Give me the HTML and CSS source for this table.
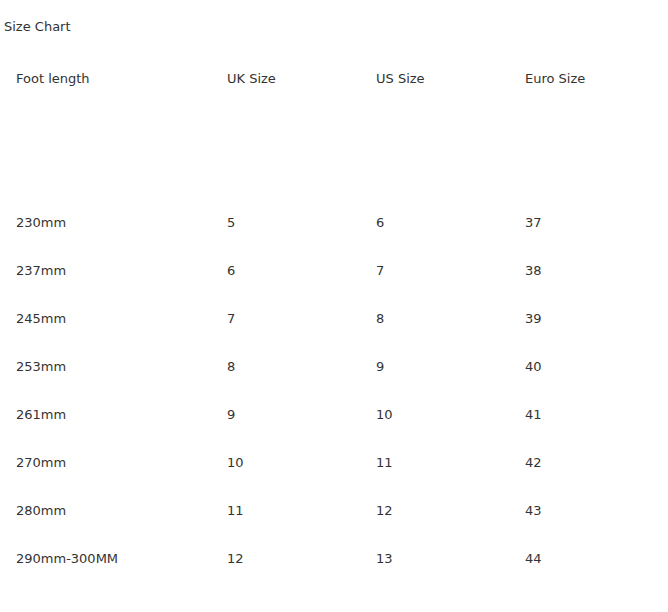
FILE: index.html
```html
<!DOCTYPE html>
<html>
<head>
<meta charset="utf-8">
<link rel="stylesheet" href="styles.css">
</head>
<body>
<div class="page">
  <div class="title">Size Chart</div>
  <div class="chart">
    <div class="row head">
      <div class="cell">Foot length</div>
      <div class="cell">UK Size</div>
      <div class="cell">US Size</div>
      <div class="cell">Euro Size</div>
    </div>
    <div class="spacer"></div>
    <div class="row"><div class="cell">230mm</div><div class="cell">5</div><div class="cell">6</div><div class="cell">37</div></div>
    <div class="row"><div class="cell">237mm</div><div class="cell">6</div><div class="cell">7</div><div class="cell">38</div></div>
    <div class="row"><div class="cell">245mm</div><div class="cell">7</div><div class="cell">8</div><div class="cell">39</div></div>
    <div class="row"><div class="cell">253mm</div><div class="cell">8</div><div class="cell">9</div><div class="cell">40</div></div>
    <div class="row"><div class="cell">261mm</div><div class="cell">9</div><div class="cell">10</div><div class="cell">41</div></div>
    <div class="row"><div class="cell">270mm</div><div class="cell">10</div><div class="cell">11</div><div class="cell">42</div></div>
    <div class="row"><div class="cell">280mm</div><div class="cell">11</div><div class="cell">12</div><div class="cell">43</div></div>
    <div class="row"><div class="cell">290mm-300MM</div><div class="cell">12</div><div class="cell">13</div><div class="cell">44</div></div>
  </div>
</div>
</body>
</html>
```

FILE: styles.css
```css
html, body {
  margin: 0;
  padding: 0;
  background: #ffffff;
}

.page {
  padding: 17px 4px 0 4px;
  font-family: "DejaVu Sans", "Liberation Sans", sans-serif;
  font-size: 13px;
  color: #333333;
}

.title {
  line-height: 20px;
  height: 20px;
  margin-bottom: 18px;
}

.chart {
  display: flex;
  flex-direction: column;
}

.row {
  display: grid;
  grid-template-columns: 211px 149px 149px 1fr;
  height: 48px;
  align-items: center;
  padding-left: 12px;
}

.cell {
  line-height: 20px;
}

.spacer {
  height: 96px;
}
```
